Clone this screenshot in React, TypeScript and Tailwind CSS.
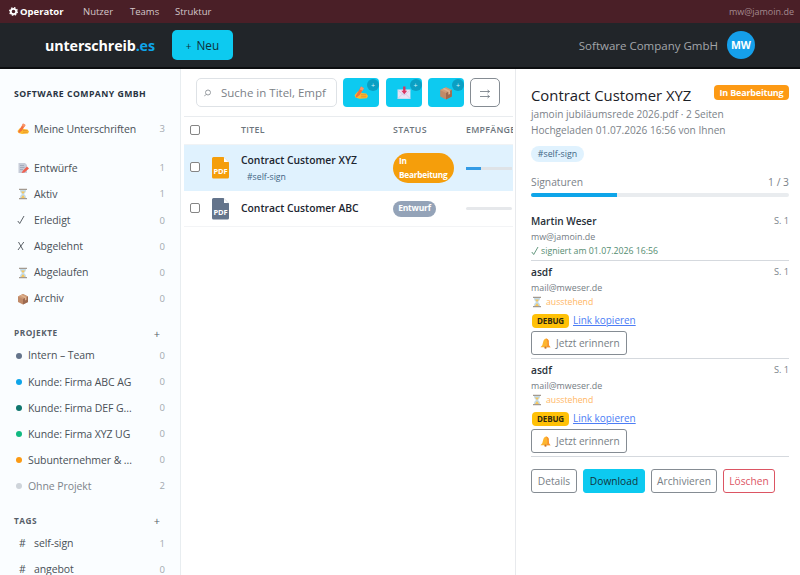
import type { ReactNode } from "react";

function Writing({ s = 12 }: { s?: number }) {
  return (
    <svg width={s} height={s} viewBox="0 0 24 24" className="shrink-0">
      <path d="M1 16 L6 10 L11 9 L13 12 L21 13 L24 17 L22 21 L10 22 L3 20Z" fill="#fdb92e" />
      <path d="M12 15h9M12 18.500h9" stroke="#e08a2c" strokeWidth="1.300" />
      <path d="M3 17 L12 1 L17 4 L10 15 L4 20Z" fill="#f4703c" />
      <path d="M12 1 L17 4 L15 8 L10 6Z" fill="#f9966a" />
    </svg>
  );
}
function Memo({ s = 12 }: { s?: number }) {
  return (
    <svg width={s} height={s} viewBox="0 0 24 24" className="shrink-0">
      <path d="M3 2h13l4 4v16H3z" fill="#c6ccd8" />
      <path d="M6 7h8M6 11h9M6 15h6" stroke="#99a2b4" strokeWidth="1.500" />
      <path d="M20 9l4 4-9 8-6 1 3-5z" fill="#f0604f" />
    </svg>
  );
}
function Hourglass({ s = 12 }: { s?: number }) {
  return (
    <svg width={s} height={s} viewBox="0 0 24 24" className="shrink-0">
      <path d="M6 4h12c0 5-2 6-4 8 2 2 4 3 4 8H6c0-5 2-6 4-8-2-2-4-3-4-8z" fill="#c3dbe8" />
      <path d="M8 7h8l-4 5zM12 14l4 6H8z" fill="#f8c55a" />
      <path d="M4 1.500h16v2.500H4zM4 20h16v2.500H4z" fill="#a39a90" />
    </svg>
  );
}
function Parcel({ s = 12 }: { s?: number }) {
  return (
    <svg width={s} height={s} viewBox="0 0 24 24" className="shrink-0">
      <path d="M2 7l10-5 10 5v11l-10 5-10-5z" fill="#c08a68" />
      <path d="M2 7l10 5 10-5-10-5z" fill="#cf9c78" />
      <path d="M12 12v11l10-5V7z" fill="#9d6a50" />
      <path d="M6 5l10 5v5l3-1.500V8.500L9 3.500z" fill="#dfb38f" />
    </svg>
  );
}
function Inbox({ s = 14 }: { s?: number }) {
  return (
    <svg width={s} height={s} viewBox="0 0 24 24" className="shrink-0">
      <path d="M1 6h22v16H1z" fill="#e9e3f4" />
      <path d="M1 22l8-8h6l8 8M1 7l11 9 11-9" fill="none" stroke="#cbc4e2" strokeWidth="1.200" />
      <path d="M10.500 1h4v7h3l-5 6-5-6h3z" fill="#d9345f" />
    </svg>
  );
}
function Bell() {
  return (
    <svg width="11" height="11" viewBox="0 0 24 24" className="shrink-0">
      <path d="M13 1c5 1 7 5 6 9l1 7 3 3H1l4-4 2-8c1-4 3-6 6-7z" fill="#fdb52f" />
      <path d="M13 1c5 1 7 5 6 9l1 7 3 3h-8c2-7 2-13-2-19z" fill="#f7922f" />
      <circle cx="12" cy="21" r="2.500" fill="#c9752d" />
    </svg>
  );
}
function Check() {
  return (
    <svg width="9" height="10" viewBox="0 0 9 10" fill="none" stroke="currentColor" className="shrink-0">
      <path d="M0.800 6L2.700 8.500L7 1" strokeWidth="0.900" />
    </svg>
  );
}
function Cross() {
  return (
    <svg width="9" height="10" viewBox="0 0 9 10" fill="none" stroke="currentColor" className="shrink-0">
      <path d="M1.500 1L6 9M6.800 1L1 9" strokeWidth="0.900" />
    </svg>
  );
}
function Pdf({ color }: { color: string }) {
  return (
    <svg width="17" height="22" viewBox="0 0 17 22" className="shrink-0">
      <path d="M1.500 0H11.500L17 5.500V20a1.500 1.500 0 0 1-1.500 1.500h-14A1.500 1.500 0 0 1 0 20V1.500A1.500 1.500 0 0 1 1.500 0z" fill={color} />
      <path d="M12 0.500L16.500 5H12z" fill="#fff" />
      <text x="8.500" y="17.400" textAnchor="middle" fill="#fff" fontSize="7.500" fontWeight="700" fontFamily="Open Sans, sans-serif" textLength="14">PDF</text>
    </svg>
  );
}

function NavRow({ icon, label, count }: { icon: ReactNode; label: string; count: number }) {
  return (
    <div className="flex h-[26.100px] items-center pr-[15px] pl-[17px]">
      <span className="flex w-[17px] items-center text-[#495057]">{icon}</span>
      <span className="flex-1 tracking-[-0.100px] text-[#495057]">{label}</span>
      <span className="text-[9.500px] text-[#a3a9af]">{count}</span>
    </div>
  );
}
function ProjectRow({ dot, label, count, muted }: { dot: string; label: string; count: number; muted?: boolean }) {
  return (
    <div className="flex h-[26.100px] items-center pr-[15px] pl-[16px]">
      <span className={"mr-[6px] size-[6px] rounded-full " + dot} />
      <span className={"flex-1 tracking-[-0.080px] " + (muted ? "text-[#7d848b]" : "text-[#495057]")}>{label}</span>
      <span className="text-[9.500px] text-[#a3a9af]">{count}</span>
    </div>
  );
}
function SideHeading({ children }: { children: ReactNode }) {
  return (
    <div className="flex h-[20px] items-center justify-between pr-[20px] pl-[14px] text-[8.300px] font-bold tracking-[0.500px] text-[#565e68]">
      <span className="pt-px">{children}</span>
      <span className="pt-px text-[11px] font-normal tracking-normal">+</span>
    </div>
  );
}
function Box() {
  return <span className="block size-[10px] shrink-0 rounded-[2px] border border-[#858585] bg-white" />;
}
function ToolButton({ children }: { children: ReactNode }) {
  return (
    <div className="relative flex h-[29px] w-[36px] shrink-0 items-center justify-center rounded-[4px] bg-[#0dcaf0]">
      {children}
      <span className="absolute top-[1px] right-0 flex size-[12px] items-center justify-center rounded-full bg-[#0b9fc3] text-[7px] text-[#d5f3fa]">+</span>
    </div>
  );
}

function Sidebar() {
  return (
    <aside className="h-full w-[181px] shrink-0 border-r border-[#e8edf0] bg-[#fafdff] text-[10.500px]">
      <div className="h-[47px] pt-[18px] pl-[14px] text-[8.700px] leading-[14px] font-bold tracking-[0.460px] text-[#283442]">SOFTWARE COMPANY GMBH</div>
      <NavRow icon={<Writing />} label="Meine Unterschriften" count={3} />
      <div className="h-[13px]" />
      <NavRow icon={<Memo />} label="Entwürfe" count={1} />
      <NavRow icon={<Hourglass />} label="Aktiv" count={1} />
      <NavRow icon={<Check />} label="Erledigt" count={0} />
      <NavRow icon={<Cross />} label="Abgelehnt" count={0} />
      <NavRow icon={<Hourglass />} label="Abgelaufen" count={0} />
      <NavRow icon={<Parcel />} label="Archiv" count={0} />
      <div className="h-[11px]" />
      <SideHeading>PROJEKTE</SideHeading>
      <ProjectRow dot="bg-[#64748b]" label="Intern – Team" count={0} />
      <ProjectRow dot="bg-[#0ea5e9]" label="Kunde: Firma ABC AG" count={0} />
      <ProjectRow dot="bg-[#0f766e]" label="Kunde: Firma DEF G..." count={0} />
      <ProjectRow dot="bg-[#10b981]" label="Kunde: Firma XYZ UG" count={0} />
      <ProjectRow dot="bg-[#fb9a14]" label="Subunternehmer & ..." count={0} />
      <ProjectRow dot="bg-[#ced4da]" label="Ohne Projekt" count={2} muted />
      <div className="h-[11px]" />
      <SideHeading>TAGS</SideHeading>
      <NavRow icon={<span className="pl-[2px]">#</span>} label="self-sign" count={1} />
      <NavRow icon={<span className="pl-[2px]">#</span>} label="angebot" count={0} />
    </aside>
  );
}

function Documents() {
  return (
    <main className="ml-[3px] h-full w-[329px] shrink-0 overflow-hidden">
      <div className="flex h-[48px] items-start border-b border-[#e9ecef] pt-[9px] pl-[12px]">
        <div className="mr-[6px] flex h-[29px] w-[141px] shrink-0 items-center overflow-hidden rounded-[5px] border border-[#dee2e6] pl-[7px] text-[11.500px] text-[#7b8187]">
          <svg width="8" height="8" viewBox="0 0 8 8" fill="none" stroke="#8b9196" strokeWidth="0.900" className="mr-[9px] shrink-0">
            <circle cx="4" cy="3.500" r="2.500" />
            <path d="M2.200 5.300L0.200 7.300" />
          </svg>
          Suche in Titel, Empf
        </div>
        <div className="mr-[6px] flex gap-[6.500px]">
          <ToolButton><Writing s={14} /></ToolButton>
          <ToolButton><Inbox /></ToolButton>
          <ToolButton><Parcel s={14} /></ToolButton>
        </div>
        <div className="flex h-[29px] w-[30px] shrink-0 items-center justify-center rounded-[5px] border border-[#858c93] pt-[3px] text-[#6c757d]">
          <svg width="10" height="10" viewBox="0 0 10 10" fill="none" stroke="currentColor" strokeWidth="0.800">
            <path d="M0 2.500H9.500M7.500 1L9.500 2.500L7.500 4M0 7.500H9.500M7.500 6L9.500 7.500L7.500 9" />
          </svg>
        </div>
      </div>
      <div className="flex h-[28px] items-center border-b border-[#f1f3f5] pl-[6px] text-[8.800px] font-semibold tracking-[0.300px] text-[#6c757d]">
        <span className="-mt-[2px]"><Box /></span>
        <span className="ml-[41px] w-[152px] shrink-0">TITEL</span>
        <span className="w-[73px] shrink-0">STATUS</span>
        <span>EMPFÄNGER</span>
      </div>
      <div className="flex h-[46px] items-center bg-[#e0f2fe] pl-[6px]">
        <span className="-mt-[2px]"><Box /></span>
        <span className="mr-[12px] ml-[12px]"><Pdf color="#f59e0b" /></span>
        <div className="w-[152px] shrink-0 text-[10.350px] font-semibold text-[#1c2530]">
          <div className="leading-[16px]">Contract Customer XYZ</div>
          <div className="pt-[2px] pl-[6px] text-[8.700px] leading-[15px] font-normal text-[#3f6583]">#self-sign</div>
        </div>
        <div className="mr-[12px] h-[30px] w-[61px] shrink-0 rounded-[15px] bg-[#f59e0b] px-[6px] pt-[1px] text-[8.300px] leading-[13.500px] font-bold tracking-[-0.250px] text-white">In<br />Bearbeitung</div>
        <div className="h-[3px] w-[46px] shrink-0 bg-[#dfe3e7]"><div className="h-full w-[15px] bg-[#349be5]" /></div>
      </div>
      <div className="flex h-[36px] items-center border-b border-[#f3f4f6] pl-[6px]">
        <span className="-mt-[2px]"><Box /></span>
        <span className="mr-[12px] ml-[12px]"><Pdf color="#64748b" /></span>
        <div className="w-[152px] shrink-0 text-[10.350px] font-semibold text-[#1c2530]">Contract Customer ABC</div>
        <div className="mr-[30px] flex h-[16px] w-[43px] shrink-0 items-center justify-center rounded-full bg-[#94a3b8] text-[8.500px] font-bold tracking-[-0.200px] text-white">Entwurf</div>
        <div className="h-[3px] w-[46px] shrink-0 rounded bg-[#e6e8eb]" />
      </div>
    </main>
  );
}

function Pending() {
  return (
    <div className="h-[98px] border-b border-[#d5d9de] pt-[4px]">
      <div className="flex justify-between leading-[15px]">
        <span className="text-[10.200px] font-semibold text-[#273039]">asdf</span>
        <span className="text-[9.200px] leading-[13px] text-[#7b838a]">S. 1</span>
      </div>
      <div className="text-[8.900px] leading-[15px] text-[#747c84]">mail@mweser.de</div>
      <div className="flex h-[14px] items-center gap-[3px] text-[8.700px] text-[#ffb765]"><Hourglass />ausstehend</div>
      <div className="mt-[2px] flex h-[20px] items-center gap-[4px] pl-px">
        <span className="flex h-[14px] w-[37px] items-center justify-center rounded-[4px] bg-[#ffc107] text-[8px] font-bold tracking-[-0.100px] text-[#30290f]">DEBUG</span>
        <span className="text-[9.950px] text-[#4c7df5] underline">Link kopieren</span>
      </div>
      <div className="flex h-[24px] w-[96px] items-center gap-[5px] rounded-[3px] border border-[#858c93] pl-[8px] text-[10.100px] text-[#777e85]"><Bell />Jetzt erinnern</div>
    </div>
  );
}

function Detail() {
  return (
    <section className="ml-[2px] h-full w-[285px] shrink-0 border-l border-[#e8eaed] bg-white pr-[11px] pl-[15px]">
      <div className="flex h-[37px] items-start justify-between pt-[16px]">
        <h1 className="text-[14.850px] leading-[20px] text-[#1b2026]">Contract Customer XYZ</h1>
        <span className="flex h-[15px] w-[75px] items-center justify-center rounded-[4px] bg-[#fd9a14] text-[9px] font-bold tracking-[-0.200px] text-white">In Bearbeitung</span>
      </div>
      <div className="text-[10.150px] leading-[16px] text-[#7b8289]">jamoin jubiläumsrede 2026.pdf · 2 Seiten<br />Hochgeladen 01.07.2026 16:56 von Ihnen</div>
      <div className="mt-[8px] flex h-[16px] w-[53px] items-center justify-center rounded-full bg-[#e0f2fe] text-[8.800px] text-[#3f6583]">#self-sign</div>
      <div className="mt-[12px] flex h-[17px] items-center justify-between text-[10.300px] text-[#7b8289]"><span>Signaturen</span><span>1 / 3</span></div>
      <div className="mt-[2px] h-[4px] overflow-hidden rounded-full bg-[#e9ecef]"><div className="h-full w-1/3 bg-[#0ea5e9]" /></div>
      <div className="mt-[12px] h-[52px] border-b border-[#d5d9de] pt-[5px]">
        <div className="flex justify-between leading-[15px]">
          <span className="text-[10.050px] font-semibold text-[#273039]">Martin Weser</span>
          <span className="text-[9.200px] leading-[13px] text-[#7b838a]">S. 1</span>
        </div>
        <div className="text-[8.900px] leading-[15px] text-[#747c84]">mw@jamoin.de</div>
        <div className="flex h-[14px] items-center gap-px text-[8.750px] text-[#548c70]"><Check />signiert am 01.07.2026 16:56</div>
      </div>
      <Pending />
      <Pending />
      <div className="mt-[12px] flex gap-[6px] text-[10.200px] *:flex *:h-[24px] *:items-center *:justify-center *:rounded-[3px] *:border">
        <span className="w-[46px] border-[#858c93] text-[#777e85]">Details</span>
        <span className="w-[62px] border-[#0dcaf0] bg-[#0dcaf0] text-[#12343d]">Download</span>
        <span className="w-[66px] border-[#858c93] text-[#777e85]">Archivieren</span>
        <span className="w-[52px] border-[#dc5563] text-[#dc5563]">Löschen</span>
      </div>
    </section>
  );
}

export default function App() {
  return (
    <div className="flex h-[575px] w-[800px] flex-col overflow-hidden bg-white font-['Open_Sans',sans-serif] leading-none whitespace-nowrap">
      <div className="flex h-[23px] shrink-0 items-center bg-[#4a1f27] pr-[6px] pl-[9px] text-[9.500px] text-[#d5c7ca]">
        <svg width="9" height="9" viewBox="0 0 20 20" className="mr-[2px]">
          <circle cx="10" cy="10" r="6" fill="none" stroke="#fff" strokeWidth="4" />
          <circle cx="10" cy="10" r="8.500" fill="none" stroke="#fff" strokeWidth="3" strokeDasharray="3.400 3.270" />
        </svg>
        <span className="w-[63px] font-bold text-white">Operator</span>
        <span className="w-[47px]">Nutzer</span>
        <span className="w-[45px]">Teams</span>
        <span className="flex-1">Struktur</span>
        <span className="text-[9px] text-[#a4898f]">mw@jamoin.de</span>
      </div>
      <header className="flex h-[46px] shrink-0 items-center border-b-2 border-[#0c0e10] bg-[#212529] pr-[45px] pl-[45px]">
        <div className="w-[127px] pt-[2px] text-[14.250px] font-bold tracking-[-0.100px] text-white">unterschreib<span className="text-[#0ea5e9]">.es</span></div>
        <div className="flex h-[30px] w-[61px] items-center justify-center gap-[5px] rounded-[5px] bg-[#0dcaf0] pt-px text-[11.800px] text-[#10313a]"><span className="text-[10px]">+</span>Neu</div>
        <span className="ml-auto pt-[2px] text-[11.500px] text-[#a3a6a9]">Software Company GmbH</span>
        <span className="ml-[9px] flex size-[28px] items-center justify-center rounded-full bg-[#159fea] pt-px text-[10.500px] font-bold text-white">MW</span>
      </header>
      <div className="flex min-h-0 flex-1">
        <Sidebar />
        <Documents />
        <Detail />
      </div>
    </div>
  );
}
